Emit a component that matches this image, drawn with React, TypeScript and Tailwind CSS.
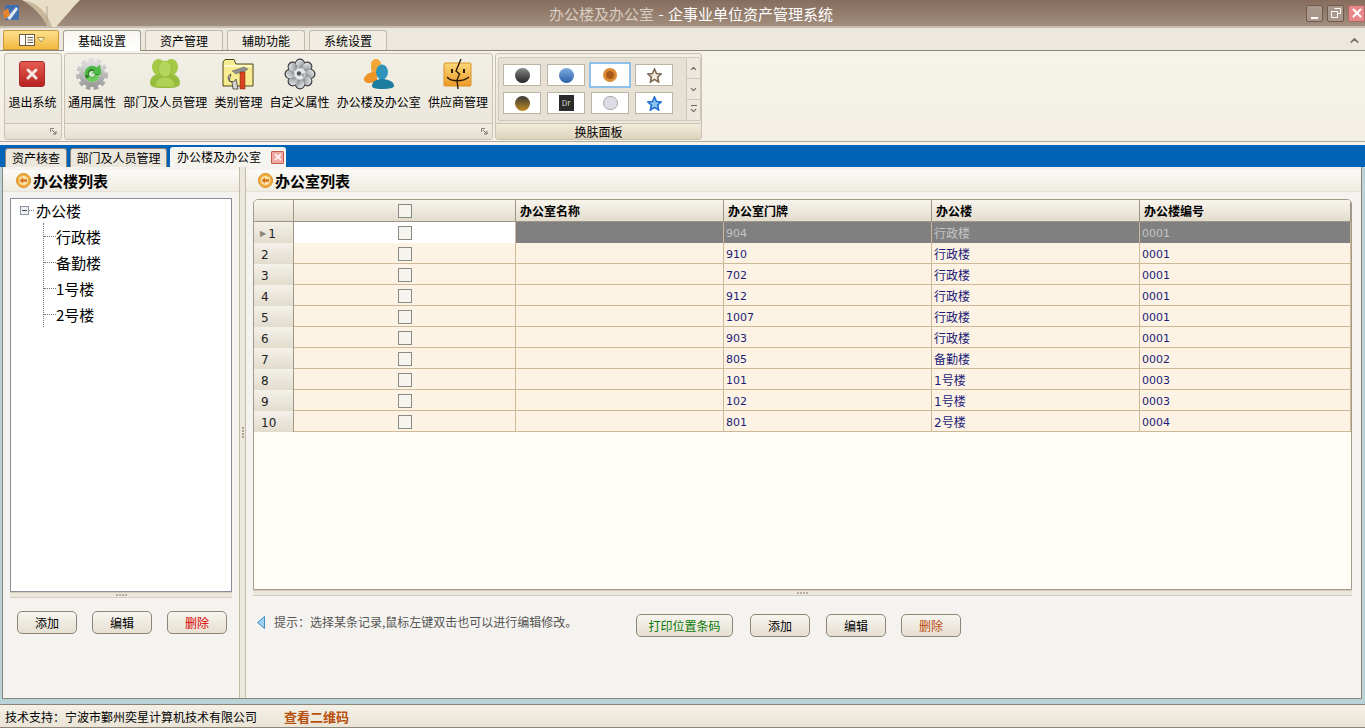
import { ChevronDown, ChevronUp, X } from 'lucide-react';
import type { ReactNode } from 'react';

type Office = { no: number; door: string; building: string; code: string };

const offices: Office[] = [
   { no: 1, door: '904', building: '行政楼', code: '0001' },
   { no: 2, door: '910', building: '行政楼', code: '0001' },
   { no: 3, door: '702', building: '行政楼', code: '0001' },
   { no: 4, door: '912', building: '行政楼', code: '0001' },
   { no: 5, door: '1007', building: '行政楼', code: '0001' },
   { no: 6, door: '903', building: '行政楼', code: '0001' },
   { no: 7, door: '805', building: '备勤楼', code: '0002' },
   { no: 8, door: '101', building: '1号楼', code: '0003' },
   { no: 9, door: '102', building: '1号楼', code: '0003' },
   { no: 10, door: '801', building: '2号楼', code: '0004' },
];

const gridCols = 'grid grid-cols-[40px_222px_208px_208px_208px_211px]';

const AppIcon = () => (
   <svg width="18" height="18" viewBox="0 0 18 18">
      <rect x="3" y="1" width="14" height="15" rx="1" fill="#3f6fb0" />
      <path d="M5 14 L14 3 L16 5 L8 16 Z" fill="#dfe8f2" />
      <path d="M1 8 L6 4 L8 11 L3 15 Z" fill="#e8862c" />
   </svg>
);

const GearGreen = () => (
   <svg width="32" height="32" viewBox="0 0 32 32">
      <defs>
         <linearGradient id="gearSteel" x1="0" y1="0" x2="0" y2="1">
            <stop offset="0" stopColor="#dcdcdc" />
            <stop offset="1" stopColor="#9d9d9d" />
         </linearGradient>
      </defs>
      <circle cx="16" cy="16" r="14" fill="none" stroke="url(#gearSteel)" strokeWidth="4" strokeDasharray="4.5 3.3" />
      <circle cx="16" cy="16" r="10.5" fill="none" stroke="url(#gearSteel)" strokeWidth="5" />
      <circle cx="16" cy="16" r="7.5" fill="#2f7f2c" />
      <circle cx="16" cy="16" r="3" fill="#d7e6cf" />
      <path d="M9 17 A7.5 7.5 0 0 1 21 9.5 L24 6.5 L25.5 16.5 L15.5 15.5 L18.5 12.5 A3.6 3.6 0 0 0 12.5 17 Z" fill="#4dbb45" />
      <path d="M23.5 17 A7.5 7.5 0 0 1 10 21 L13.5 18.5 A3.6 3.6 0 0 0 19.5 17 Z" fill="#6ccd5c" />
   </svg>
);

const PeopleGreen = () => (
   <svg width="32" height="32" viewBox="0 0 32 32">
      <ellipse cx="9.5" cy="9" rx="6.5" ry="8" fill="#a3c945" />
      <ellipse cx="22.5" cy="9" rx="6.5" ry="8" fill="#a3c945" />
      <path d="M1 25 C1 19 6 16 10 16 L22 16 C26 16 31 19 31 25 C31 29 27 30 16 30 C5 30 1 29 1 25 Z" fill="#97be3c" />
      <ellipse cx="16" cy="11" rx="6.5" ry="8" fill="#b5d65c" stroke="#8fb338" strokeWidth="0.6" />
      <path d="M6 29 C6 22 11 19 16 19 C21 19 26 22 26 29 Z" fill="#afd154" stroke="#8fb338" strokeWidth="0.6" />
   </svg>
);

const FolderTools = () => (
   <svg width="32" height="32" viewBox="0 0 32 32">
      <path d="M1 4 L1 28 L31 28 L31 6 L14 6 L12 1.5 L3 1.5 Z" fill="#f8ec92" stroke="#4f4618" strokeWidth="1" />
      <path d="M2 7 L30 7 L30 9 L2 9 Z" fill="#fdf8c8" />
      <path d="M10 13 L22 9 L26 11 L22 14 L19 14 L14 16 Z" fill="#8f9091" stroke="#4a4a4a" strokeWidth="0.4" />
      <rect x="18" y="14" width="5" height="17" fill="#d8431c" stroke="#7a2410" strokeWidth="0.5" />
      <path d="M9 16 A4 4 0 1 0 14 21 L16 31 L11 31 L10 24 L7 23 Z" fill="#d3d3d3" stroke="#3c3c3c" strokeWidth="0.8" />
   </svg>
);

const lobes = [0, 45, 90, 135, 180, 225, 270, 315];

const GearSilver = () => (
   <svg width="32" height="32" viewBox="0 0 32 32">
      <defs>
         <linearGradient id="lobeSteel" x1="0" y1="0" x2="1" y2="1">
            <stop offset="0" stopColor="#f0f1f2" />
            <stop offset="0.55" stopColor="#b6b8bc" />
            <stop offset="1" stopColor="#6f7176" />
         </linearGradient>
      </defs>
      {lobes.map((deg) => (
         <circle key={deg} cx="16" cy="5.5" r="5" fill="#3f4044" transform={`rotate(${deg} 16 16)`} />
      ))}
      <circle cx="16" cy="16" r="11" fill="url(#lobeSteel)" />
      {lobes.map((deg) => (
         <circle key={deg} cx="16" cy="6" r="4.2" fill="url(#lobeSteel)" transform={`rotate(${deg} 16 16)`} />
      ))}
      <circle cx="16" cy="16" r="5.5" fill="#e6e7e9" />
      <circle cx="15" cy="15.5" r="2.2" fill="#55565a" />
      <path d="M16 16 L21 15 L20 20 Z" fill="#a7a9ad" />
   </svg>
);

const PeopleBlue = () => (
   <svg width="32" height="32" viewBox="0 0 32 32">
      <rect x="8" y="1" width="10" height="15" rx="5" fill="#f2a73a" />
      <path d="M1 20 C4 15 9 13 14 14 L14 24 L6 25 C3 25 0 23 1 20 Z" fill="#ee9427" />
      <ellipse cx="19" cy="14" rx="6" ry="7.5" fill="#2b94b8" />
      <path d="M9 28 C9 23 14 21 19 21 C24 21 31 23 31 28 C31 30 27 31 19 31 C12 31 9 30 9 28 Z" fill="#1d7d9f" />
   </svg>
);

const FinderOrange = () => (
   <svg width="30" height="32" viewBox="0 0 30 32">
      <defs>
         <linearGradient id="finderFace" x1="0" y1="0" x2="0" y2="1">
            <stop offset="0" stopColor="#fbd777" />
            <stop offset="1" stopColor="#ee9a28" />
         </linearGradient>
      </defs>
      <rect x="1" y="5" width="27" height="23" rx="1" fill="url(#finderFace)" stroke="#d99226" />
      <path d="M18 1 L13 13 L16.5 16 L14 22 L15 31" fill="none" stroke="#2a1c08" strokeWidth="1.4" />
      <path d="M4 19 C8 24 20 24 26 19" fill="none" stroke="#2a1c08" strokeWidth="1.3" />
      <rect x="8" y="11" width="2" height="4" fill="#2a1c08" />
      <rect x="20" y="11" width="2" height="4" fill="#2a1c08" />
   </svg>
);

const ExitIcon = () => (
   <div className="flex h-[26px] w-[26px] items-center justify-center rounded-[3px] border border-[#a92a2a] bg-gradient-to-b from-[#e45a50] to-[#b8201f]">
      <X size={16} strokeWidth={4.5} className="text-[#f5e9e6]" />
   </div>
);

const ArrowBullet = () => (
   <svg width="15" height="15" viewBox="0 0 15 15" className="shrink-0">
      <circle cx="7.5" cy="7.5" r="7" fill="#f1ae3f" stroke="#d98a20" />
      <circle cx="7.5" cy="7.5" r="4.6" fill="#f9e3b0" />
      <path d="M3.5 7.5 L7 4.5 L7 6.3 L11 6.3 L11 8.7 L7 8.7 L7 10.5 Z" fill="#d8761c" />
   </svg>
);

const Launcher = () => (
   <svg width="7" height="7" viewBox="0 0 7 7">
      <path d="M0.5 0.5 H4 M0.5 0.5 V4" stroke="#8b8378" fill="none" />
      <path d="M2 2 L6 6 M6 3 V6 H3" stroke="#77706a" fill="none" />
   </svg>
);

const RibbonButton = ({ icon, label }: { icon: ReactNode; label: string }) => (
   <div className="flex flex-col items-center">
      <div className="flex h-[34px] items-center">{icon}</div>
      <div className="mt-[3px] whitespace-nowrap text-[12px] leading-[16px] text-black">{label}</div>
   </div>
);

const GroupFooter = ({ children }: { children?: ReactNode }) => (
   <div className="flex h-[16px] items-center justify-end border-t border-[#c9c2b3] bg-gradient-to-b from-[#f2eee5] to-[#e4dfd1] pr-[4px]">
      {children}
   </div>
);

const SkinThumb = ({ children, selected }: { children: ReactNode; selected?: boolean }) => (
   <div
      className={
         selected
            ? 'flex h-[22px] w-[38px] items-center justify-center bg-white outline-2 outline-[#8fc1e8]'
            : 'flex h-[22px] w-[38px] items-center justify-center border border-[#bdb4a4] bg-white'
      }
   >
      {children}
   </div>
);

const Ball = ({ from, to }: { from: string; to: string }) => (
   <div className="h-[15px] w-[15px] rounded-full" style={{ background: `linear-gradient(${from}, ${to})` }} />
);

const Star = ({ fill, stroke }: { fill: string; stroke: string }) => (
   <svg width="15" height="15" viewBox="0 0 15 15">
      <path
         d="M7.5 1 L9.5 5.5 L14 6 L10.7 9 L11.6 14 L7.5 11.4 L3.4 14 L4.3 9 L1 6 L5.5 5.5 Z"
         fill={fill}
         stroke={stroke}
         strokeWidth="1.6"
      />
   </svg>
);

const ActionButton = ({ label, color, width = 'w-[60px]' }: { label: string; color: string; width?: string }) => (
   <button
      className={`flex h-[23px] ${width} items-center justify-center rounded-[5px] border border-[#8f8478] bg-gradient-to-b from-[#f7f5ef] to-[#e6e0d2] text-[12px] ${color}`}
   >
      {label}
   </button>
);

const Grip = () => (
   <div className="flex gap-[1px]">
      {[1, 2, 3, 4].map((i) => (
         <div key={i} className="h-[2px] w-[2px] bg-[#b5afa3]" />
      ))}
   </div>
);

const SplitStrip = () => (
   <div className="flex h-[6px] items-center justify-center border-y border-[#d5cdbd] bg-[#ece7dc]">
      <Grip />
   </div>
);

const PanelHeader = ({ title, inset }: { title: string; inset: string }) => (
   <div className={`mt-[3px] flex h-[22px] items-center gap-[2px] border-b border-[#e6e1d6] bg-gradient-to-b from-[#fbfaf6] to-[#efebe2] ${inset}`}>
      <ArrowBullet />
      <span className="text-[15px] font-bold leading-none text-black">{title}</span>
   </div>
);

const Check = () => <div className="h-[14px] w-[14px] border border-[#8a8a82] bg-[#f6f4ee]" />;

const HeadCell = ({ label }: { label: string }) => (
   <div className="flex items-center border-r border-[#9c9484] pl-[4px] text-[12px] font-bold text-black">{label}</div>
);

const OfficeRow = ({ office }: { office: Office }) => {
   const selected = office.no === 1;
   const bodyCell = selected
      ? 'flex items-center border-r border-[#c9b893] bg-[#808080] pl-[2px] pt-[3px] text-[#c4c4c4]'
      : 'flex items-center border-r border-[#cdb995] pl-[2px] pt-[3px] text-[#1c1c78]';

   return (
      <div className={`${gridCols} h-[21px] border-b border-[#cdb995] bg-[#fdf3e4] font-['DejaVu_Sans','Noto_Sans_CJK_SC',sans-serif] text-[11px]`}>
         <div className="flex items-center border-r border-[#a09684] bg-gradient-to-b from-[#f4f1e9] to-[#e2dccd] pl-[6px] pt-[3px] text-[12px] text-[#222]">
            <span className={selected ? 'mr-[2px] text-[8px] text-[#8c8474]' : 'hidden'}>▶</span>
            <span className={selected ? '' : 'pl-[1px]'}>{office.no}</span>
         </div>
         <div className={`flex items-center justify-center border-r border-[#cdb995] ${selected ? 'bg-white' : ''}`}>
            <Check />
         </div>
         <div className={selected ? bodyCell : 'border-r border-[#cdb995]'} />
         <div className={bodyCell}>{office.door}</div>
         <div className={`${bodyCell} text-[12px]`}>{office.building}</div>
         <div className={bodyCell}>{office.code}</div>
      </div>
   );
};

const TreeChild = ({ label }: { label: string }) => (
   <div className="flex h-[26px] items-center">
      <div className="w-[12px] border-t border-dotted border-[#777]" />
      <span className="text-[15px] leading-none text-black">{label}</span>
   </div>
);

const App = () => {
   return (
      <div className="flex h-[728px] w-[1365px] flex-col overflow-hidden bg-[#f5f3ef] font-['Noto_Sans_CJK_SC','Liberation_Sans',sans-serif]">
         {/* title bar */}
         <div className="relative flex h-[28px] shrink-0 items-center border-b-2 border-[#c8bcb0] bg-gradient-to-b from-[#866c5c] to-[#a28e7e]">
            <div className="ml-[2px]">
               <AppIcon />
            </div>
            <svg width="60" height="27" viewBox="0 0 60 27" className="ml-[2px]">
               <path d="M0 0 H58 C50 8 42 18 34 27 H26 C22 18 12 6 0 0 Z" fill="#e9dfc8" />
               <path d="M26 27 C22 18 12 6 0 0 C12 2 24 8 30 27 Z" fill="#c9b99c" />
               <path d="M25 6 V22" stroke="#b0a48e" />
            </svg>
            <div className="absolute left-[549px] whitespace-nowrap text-[15px] leading-none text-white">
               <span className="text-[#d8cdc1]">办公楼及办公室</span>
               <span className="mx-[1px]"> - </span>
               <span>企事业单位资产管理系统</span>
            </div>
            <div className="ml-auto flex gap-[4px]">
               <div className="flex h-[17px] w-[17px] items-end justify-center rounded-[2px] border border-[#6f5a4c] bg-[#a8978a] pb-[2px]">
                  <div className="h-[2px] w-[7px] bg-white" />
               </div>
               <div className="flex h-[17px] w-[17px] items-center justify-center rounded-[2px] border border-[#6f5a4c] bg-[#a8978a]">
                  <svg width="10" height="10" viewBox="0 0 10 10">
                     <path d="M3.5 0.5 H9.5 V5.5 H7 M0.5 3.5 H6.5 V9.5 H0.5 Z" fill="none" stroke="white" />
                  </svg>
               </div>
               <div className="flex h-[17px] w-[17px] items-center justify-center rounded-[2px] border border-[#a86a64] bg-[#e8868a]">
                  <X size={14} strokeWidth={3.5} className="text-white" />
               </div>
            </div>
         </div>

         {/* ribbon tabs */}
         <div className="flex h-[23px] shrink-0 items-end gap-[4px] border-b border-[#8f8578] bg-[#ece8dd] pl-[3px]">
            <div className="flex h-[20px] w-[56px] items-center gap-[2px] rounded-t-[2px] border border-[#c99a3a] bg-gradient-to-b from-[#fce08a] to-[#f2b83c] pl-[15px]">
               <svg width="16" height="12" viewBox="0 0 16 12">
                  <rect x="0.5" y="0.5" width="15" height="11" fill="white" stroke="#6a5a3c" />
                  <path d="M6.5 1 V11 M8.5 3.5 H14 M8.5 6 H14 M8.5 8.5 H14" stroke="#6a5a3c" />
               </svg>
               <svg width="8" height="6" viewBox="0 0 8 6">
                  <path d="M0.5 0.5 H7.5 L4 5 Z" fill="#fff3c8" stroke="#9a8452" strokeWidth="0.8" />
               </svg>
            </div>
            <div className="-mb-px flex h-[21px] w-[78px] items-center justify-center rounded-t-[3px] border border-b-0 border-[#a89f90] bg-gradient-to-b from-[#f8f6f0] to-white text-[12px] text-black">
               基础设置
            </div>
            {['资产管理', '辅助功能', '系统设置'].map((tab) => (
               <div
                  key={tab}
                  className="flex h-[20px] w-[78px] items-center justify-center rounded-t-[3px] border border-b-0 border-[#c2baaa] bg-[#f1ede3] text-[12px] text-black"
               >
                  {tab}
               </div>
            ))}
            <div className="mb-[3px] ml-auto mr-[4px]">
               <ChevronUp size={13} strokeWidth={3} className="text-[#7c7267]" />
            </div>
         </div>

         {/* ribbon */}
         <div className="flex h-[91px] shrink-0 gap-[2px] border-b border-[#b0a898] bg-gradient-to-b from-[#f6f3ea] to-[#f3efe5] pl-[4px] pt-[2px]">
            <div className="flex h-[87px] w-[58px] flex-col overflow-hidden rounded-[3px] border border-[#c9c2b3] bg-gradient-to-b from-[#f2efe6] to-[#e9e5d9]">
               <div className="flex flex-1 justify-center pr-[1px] pt-[3px]">
                  <RibbonButton icon={<ExitIcon />} label="退出系统" />
               </div>
               <GroupFooter>
                  <Launcher />
               </GroupFooter>
            </div>
            <div className="flex h-[87px] w-[429px] flex-col overflow-hidden rounded-[3px] border border-[#c9c2b3] bg-gradient-to-b from-[#f2efe6] to-[#e9e5d9]">
               <div className="flex flex-1 gap-[7.2px] pl-[3px] pt-[3px]">
                  <RibbonButton icon={<GearGreen />} label="通用属性" />
                  <RibbonButton icon={<PeopleGreen />} label="部门及人员管理" />
                  <RibbonButton icon={<FolderTools />} label="类别管理" />
                  <RibbonButton icon={<GearSilver />} label="自定义属性" />
                  <RibbonButton icon={<PeopleBlue />} label="办公楼及办公室" />
                  <RibbonButton icon={<FinderOrange />} label="供应商管理" />
               </div>
               <GroupFooter>
                  <Launcher />
               </GroupFooter>
            </div>
            <div className="flex h-[87px] w-[207px] flex-col overflow-hidden rounded-[3px] border border-[#c9c2b3] bg-gradient-to-b from-[#f2efe6] to-[#e9e5d9]">
               <div className="flex flex-1 pl-[2px] pt-[3px]">
                  <div className="h-[64px] w-[189px] rounded-l-[2px] border border-[#cfc8b8] bg-[#e6e1d4] pl-[4px] pt-[6px]">
                     <div className="grid grid-cols-[38px_38px_38px_38px] gap-x-[6px] gap-y-[6px]">
                        <SkinThumb>
                           <Ball from="#8a8a8a" to="#222" />
                        </SkinThumb>
                        <SkinThumb>
                           <Ball from="#80aee0" to="#2a5fa8" />
                        </SkinThumb>
                        <SkinThumb selected>
                           <div className="h-[14px] w-[14px] rounded-full border-[3px] border-[#d98a34] bg-[#a85a1c]" />
                        </SkinThumb>
                        <SkinThumb>
                           <Star fill="#f0e8d8" stroke="#7d6a50" />
                        </SkinThumb>
                        <SkinThumb>
                           <Ball from="#3a3a3a" to="#c08a20" />
                        </SkinThumb>
                        <SkinThumb>
                           <div className="flex h-[16px] w-[15px] items-center justify-center bg-[#2b2b2b] text-[8px] leading-none text-[#d8d8d8]">
                              Dr
                           </div>
                        </SkinThumb>
                        <SkinThumb>
                           <div className="h-[14px] w-[15px] rounded-full border border-[#aaa] bg-[#dcdce6]" />
                        </SkinThumb>
                        <SkinThumb>
                           <Star fill="#8cc4f0" stroke="#1f6fd0" />
                        </SkinThumb>
                     </div>
                  </div>
                  <div className="flex h-[64px] w-[14px] flex-col rounded-r-[2px] border border-l-0 border-[#cfc8b8] bg-[#ece8dd]">
                     <div className="flex flex-1 items-center justify-center border-b border-[#cfc8b8]">
                        <ChevronUp size={9} strokeWidth={3} className="text-[#6f675c]" />
                     </div>
                     <div className="flex flex-1 items-center justify-center border-b border-[#cfc8b8]">
                        <ChevronDown size={9} strokeWidth={3} className="text-[#6f675c]" />
                     </div>
                     <div className="flex flex-1 flex-col items-center justify-center">
                        <div className="h-[1px] w-[6px] bg-[#6f675c]" />
                        <ChevronDown size={9} strokeWidth={3} className="text-[#6f675c]" />
                     </div>
                  </div>
               </div>
               <div className="flex h-[16px] items-center justify-center border-t border-[#c9c2b3] bg-gradient-to-b from-[#f2ecdc] to-[#dcd3bb] text-[12px] leading-none text-black">
                  换肤面板
               </div>
            </div>
         </div>

         <div className="h-[3px] shrink-0 bg-[#f7f5ef]" />

         {/* document tabs */}
         <div className="flex h-[22px] shrink-0 items-end gap-[3px] bg-[#0063b8] pl-[5px]">
            <div className="flex h-[19px] w-[62px] items-center justify-center rounded-t-[3px] border border-b-0 border-[#8f8578] bg-[#ece7dc] text-[12px] text-black">
               资产核查
            </div>
            <div className="flex h-[19px] w-[97px] items-center justify-center rounded-t-[3px] border border-b-0 border-[#8f8578] bg-[#ece7dc] text-[12px] text-black">
               部门及人员管理
            </div>
            <div className="flex h-[20px] w-[116px] items-center gap-[10px] rounded-t-[3px] bg-[#f6f4ee] pl-[7px] text-[12px] text-black">
               办公楼及办公室
               <div className="flex h-[13px] w-[13px] items-center justify-center rounded-[1px] border border-[#c45a50] bg-[#f0a8a0]">
                  <X size={10} strokeWidth={3.5} className="text-white" />
               </div>
            </div>
         </div>

         {/* main */}
         <div className="h-[537px] shrink-0 bg-[#b9d3d8] pb-[5px] pl-[2px] pr-[3px]">
            <div className="flex h-full border-b border-l border-r border-[#8d8478] bg-[#f5f3ef]">
               <div className="flex w-[236px] flex-col">
                  <PanelHeader title="办公楼列表" inset="pl-[13px]" />
                  <div className="ml-[7px] mt-[6px] h-[394px] w-[222px] border border-[#8b8b99] bg-white pl-[9px]">
                     <div className="-mt-[2px]">
                        <div className="flex h-[26px] items-center">
                           <div className="flex h-[9px] w-[9px] items-center justify-center border border-[#8a94a4] bg-[#eef0f2]">
                              <div className="h-[1px] w-[5px] bg-[#445]" />
                           </div>
                           <div className="w-[5px] border-t border-dotted border-[#777]" />
                           <span className="ml-[2px] text-[15px] leading-none text-black">办公楼</span>
                        </div>
                        <div className="ml-[23px] border-l border-dotted border-[#777]">
                           {['行政楼', '备勤楼', '1号楼', '2号楼'].map((name) => (
                              <TreeChild key={name} label={name} />
                           ))}
                        </div>
                     </div>
                  </div>
                  <div className="ml-[7px] w-[222px]">
                     <SplitStrip />
                  </div>
                  <div className="ml-[14px] mt-[13px] flex gap-[15px]">
                     <ActionButton label="添加" color="text-black" />
                     <ActionButton label="编辑" color="text-black" />
                     <ActionButton label="删除" color="text-[#d80000]" />
                  </div>
               </div>

               <div className="flex w-[7px] items-center justify-center border-x border-[#c4bcab] bg-[#ece8de]">
                  <div className="flex flex-col gap-[1px]">
                     {[1, 2, 3, 4].map((i) => (
                        <div key={i} className="h-[2px] w-[2px] bg-[#a8a295]" />
                     ))}
                  </div>
               </div>

               <div className="flex flex-1 flex-col">
                  <PanelHeader title="办公室列表" inset="pl-[12px]" />
                  <div className="ml-[7px] mt-[7px] h-[391px] w-[1099px] overflow-hidden rounded-t-[5px] border border-[#a39a8a] bg-[#fffdf6]">
                     <div className={`${gridCols} h-[22px] border-b border-[#9c9484] bg-gradient-to-b from-[#f8f5ee] to-[#e2dccc]`}>
                        <div className="border-r border-[#9c9484]" />
                        <div className="flex items-center justify-center border-r border-[#9c9484]">
                           <Check />
                        </div>
                        <HeadCell label="办公室名称" />
                        <HeadCell label="办公室门牌" />
                        <HeadCell label="办公楼" />
                        <HeadCell label="办公楼编号" />
                     </div>
                     {offices.map((office) => (
                        <OfficeRow key={office.no} office={office} />
                     ))}
                  </div>
                  <div className="ml-[7px] w-[1099px]">
                     <SplitStrip />
                  </div>
                  <div className="ml-[11px] mt-[18px] flex items-center">
                     <div className="flex w-[17px] self-start pt-[2px]">
                        <svg width="8" height="13" viewBox="0 0 8 13">
                           <path d="M7.5 0.5 L0.5 6.5 L7.5 12.5 Z" fill="#9fd0f0" stroke="#3f8fc8" />
                        </svg>
                     </div>
                     <span className="w-[362px] self-start whitespace-nowrap text-[12px] leading-[16px] text-[#555]">
                        提示：选择某条记录,鼠标左键双击也可以进行编辑修改。
                     </span>
                     <div className="flex gap-[16px]">
                        <ActionButton label="打印位置条码" color="text-[#0a7a0a]" width="w-[97px] mr-[1px]" />
                        <ActionButton label="添加" color="text-black" />
                        <ActionButton label="编辑" color="text-black" />
                        <ActionButton label="删除" color="text-[#b84a0c]" width="w-[60px] -ml-px" />
                     </div>
                  </div>
               </div>
            </div>
         </div>

         {/* status bar */}
         <div className="flex flex-1 items-center border-y border-[#8d8478] bg-gradient-to-b from-[#f4f0e6] to-[#e9e4d6] pl-[5px] pt-[1px]">
            <span className="w-[279px] text-[12px] text-black">技术支持：宁波市鄞州奕星计算机技术有限公司</span>
            <span className="text-[13px] font-bold text-[#b8500f]">查看二维码</span>
         </div>
      </div>
   );
};

export default App;
